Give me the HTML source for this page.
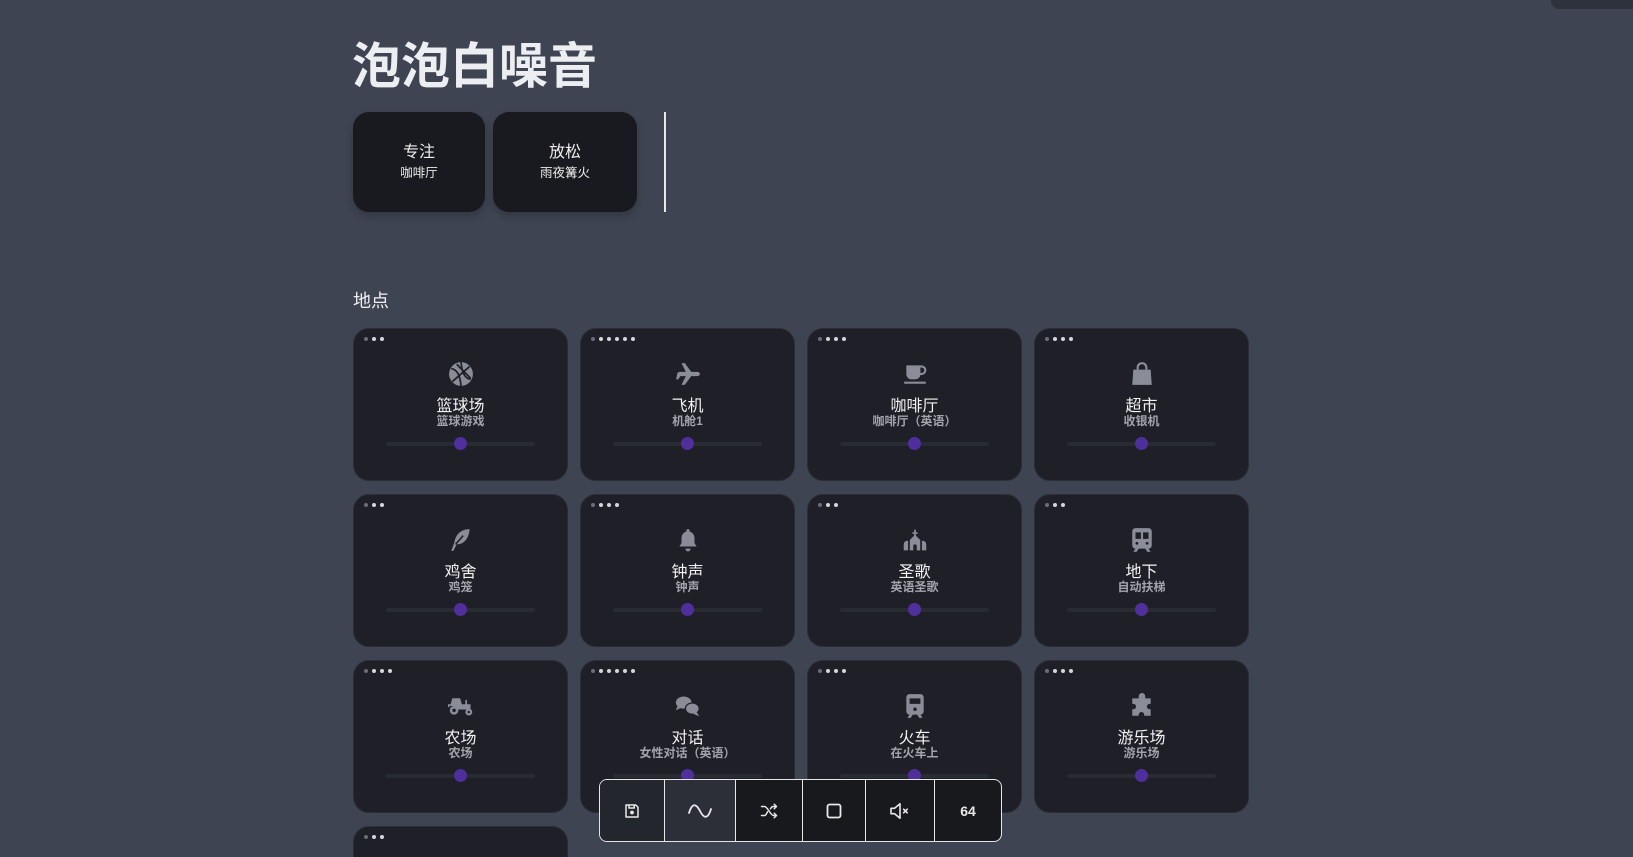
<!DOCTYPE html>
<html><head><meta charset="utf-8"><style>
*{margin:0;padding:0;box-sizing:border-box}
html,body{width:1633px;height:857px;overflow:hidden}
body{background:#3e4451;font-family:"Liberation Sans","Noto Sans CJK SC",sans-serif;position:relative;color:#fff}
h1{position:absolute;left:352px;top:36px;font-size:49px;font-weight:bold;color:#eceef2;line-height:62px}
.pre{position:absolute;top:112px;height:100px;background:#191a1f;border-radius:16px;text-align:center;box-shadow:0 4px 8px rgba(0,0,0,.2)}
.pre .a{font-size:16px;margin-top:31px;line-height:20px;color:#eee}
.pre .b{font-size:12.5px;line-height:18px;margin-top:1px;color:#eee}
.vl{position:absolute;left:664px;top:112px;width:2px;height:100px;background:#e8e8e8}
.lbl{position:absolute;left:353px;top:287px;font-size:18px;color:#f0f0f0}
.card{position:absolute;width:215px;height:153px;background:#1e1f27;border:1px solid #2b2e37;border-radius:16px}
.dots{position:absolute;left:10px;top:8px;display:flex;gap:4px}
.dots i{width:4px;height:4px;border-radius:50%;background:#d4d6dc}
.dots i:first-child{background:#6a6d77}
.ic{position:absolute;left:94px;top:32px;width:26px;height:26px}
.t{position:absolute;left:0;right:0;top:69px;text-align:center;font-size:16px;line-height:18px;color:#f2f2f2}
.s{position:absolute;left:0;right:0;top:85px;text-align:center;font-size:12px;line-height:14px;color:#a2a4aa;font-weight:bold}
.tr{position:absolute;left:32px;top:113px;width:149px;height:4px;border-radius:2px;background:#292b33}
.th{position:absolute;left:100px;top:108px;width:13px;height:13px;border-radius:50%;background:#4f2f9c}
.bar{position:absolute;left:599px;top:779px;width:403px;height:63px;background:#18191d;border:1px solid #e6e6e6;border-radius:8px;overflow:hidden;display:flex}
.bar div{height:100%;border-right:1px solid #e6e6e6;display:flex;align-items:center;justify-content:center}
.bar div:last-child{border-right:none}
.tl{position:absolute;left:1551px;top:0;width:82px;height:9px;background:#2e323b;border-bottom-left-radius:8px}
</style></head><body>
<div class="tl"></div>
<h1>泡泡白噪音</h1>
<div class="pre" style="left:353px;width:132px"><div class="a">专注</div><div class="b">咖啡厅</div></div>
<div class="pre" style="left:493px;width:144px"><div class="a">放松</div><div class="b">雨夜篝火</div></div>
<div class="vl"></div>
<div class="lbl">地点</div>

<div class="card" style="left:353px;top:328px"><div class="dots"><i></i><i></i><i></i></div>
<svg class="ic" viewBox="0 0 24 24"><circle cx="12" cy="12" r="11" fill="#8a8d97"/><path d="M3 7c5 1 8 5 9 16M21 17c-5-1-8-5-9-16M4 19L20 5M8 3l13 13" stroke="#1e1f27" stroke-width="1.6" fill="none"/></svg>
<div class="t">篮球场</div><div class="s">篮球游戏</div><div class="tr"></div><div class="th"></div></div>

<div class="card" style="left:580px;top:328px"><div class="dots"><i></i><i></i><i></i><i></i><i></i><i></i></div>
<svg class="ic" viewBox="0 0 24 24"><path d="M2 12c0-1 1-2 3-2h5L6 2h3l6 8h5c2 0 3 1 3 2s-1 2-3 2h-5l-6 8H6l4-8H5l-2 3H1l1-5z" fill="#8a8d97"/></svg>
<div class="t">飞机</div><div class="s">机舱1</div><div class="tr"></div><div class="th"></div></div>

<div class="card" style="left:807px;top:328px"><div class="dots"><i></i><i></i><i></i><i></i></div>
<svg class="ic" viewBox="0 0 24 24"><path d="M4 4h14a4 4 0 010 9h-1a5 5 0 01-5 4H9a5 5 0 01-5-5z M17 6v5h1a2.5 2.5 0 000-5z M2 19h20v2H2z" fill="#8a8d97" fill-rule="evenodd"/></svg>
<div class="t">咖啡厅</div><div class="s">咖啡厅（英语）</div><div class="tr"></div><div class="th"></div></div>

<div class="card" style="left:1034px;top:328px"><div class="dots"><i></i><i></i><i></i><i></i></div>
<svg class="ic" viewBox="0 0 24 24"><path d="M8 8V6a4 4 0 018 0v2" stroke="#8a8d97" stroke-width="2" fill="none"/><path d="M4 8h16l1 14H3z" fill="#8a8d97"/></svg>
<div class="t">超市</div><div class="s">收银机</div><div class="tr"></div><div class="th"></div></div>

<div class="card" style="left:353px;top:494px"><div class="dots"><i></i><i></i><i></i></div>
<svg class="ic" viewBox="0 0 24 24"><path d="M20 2C12 2 7 7 6 14l-3 8h2l3-6c6 0 11-4 12-14z" fill="#8a8d97"/><path d="M7 16l7-8" stroke="#1e1f27" stroke-width="1.4"/></svg>
<div class="t">鸡舍</div><div class="s">鸡笼</div><div class="tr"></div><div class="th"></div></div>

<div class="card" style="left:580px;top:494px"><div class="dots"><i></i><i></i><i></i><i></i></div>
<svg class="ic" viewBox="0 0 24 24"><path d="M12 2a1.5 1.5 0 011.5 1.5v.7A6 6 0 0118 10v5l2 3H4l2-3v-5a6 6 0 014.5-5.8v-.7A1.5 1.5 0 0112 2zM9.5 20h5a2.5 2.5 0 01-5 0z" fill="#8a8d97"/></svg>
<div class="t">钟声</div><div class="s">钟声</div><div class="tr"></div><div class="th"></div></div>

<div class="card" style="left:807px;top:494px"><div class="dots"><i></i><i></i><i></i></div>
<svg class="ic" viewBox="0 0 30 24"><path d="M14 0h2v3h2v2h-2v2l5 5v12h-4v-5a2 2 0 00-4 0v5H9V12l5-5V5h-2V3h2z M7 13v11H2v-7a4 4 0 015-4z M23 13v11h5v-7a4 4 0 00-5-4z" fill="#8a8d97"/></svg>
<div class="t">圣歌</div><div class="s">英语圣歌</div><div class="tr"></div><div class="th"></div></div>

<div class="card" style="left:1034px;top:494px"><div class="dots"><i></i><i></i><i></i></div>
<svg class="ic" viewBox="0 0 24 24"><path d="M6 1h12a3 3 0 013 3v13a3 3 0 01-3 3l2 3h-3l-2-3H9l-2 3H4l2-3a3 3 0 01-3-3V4a3 3 0 013-3zM6 5v6h5V5zM13 5v6h5V5zM6 15a1.3 1.3 0 102.6 0 1.3 1.3 0 00-2.6 0zM15.4 15a1.3 1.3 0 102.6 0 1.3 1.3 0 00-2.6 0z" fill="#8a8d97" fill-rule="evenodd"/></svg>
<div class="t">地下</div><div class="s">自动扶梯</div><div class="tr"></div><div class="th"></div></div>

<div class="card" style="left:353px;top:660px"><div class="dots"><i></i><i></i><i></i><i></i></div>
<svg class="ic" viewBox="0 0 30 24"><path d="M5 3h9l2 7h4V5h2v5h4v5l-3 1-14 0a5 5 0 00-9-2V10h3z" fill="#8a8d97"/><circle cx="7" cy="17" r="5" fill="#8a8d97"/><circle cx="7" cy="17" r="2" fill="#1e1f27"/><circle cx="24" cy="19" r="4" fill="#8a8d97"/><circle cx="24" cy="19" r="1.4" fill="#1e1f27"/></svg>
<div class="t">农场</div><div class="s">农场</div><div class="tr"></div><div class="th"></div></div>

<div class="card" style="left:580px;top:660px"><div class="dots"><i></i><i></i><i></i><i></i><i></i><i></i></div>
<svg class="ic" viewBox="0 0 30 24"><ellipse cx="10" cy="8" rx="9" ry="7" fill="#8a8d97"/><path d="M3 12l-2 5 6-3z" fill="#8a8d97"/><ellipse cx="20" cy="15" rx="8" ry="6.5" fill="#8a8d97" stroke="#1e1f27" stroke-width="1.5"/><path d="M25 19l3 5-7-3z" fill="#8a8d97"/></svg>
<div class="t">对话</div><div class="s">女性对话（英语）</div><div class="tr"></div><div class="th"></div></div>

<div class="card" style="left:807px;top:660px"><div class="dots"><i></i><i></i><i></i><i></i></div>
<svg class="ic" viewBox="0 0 24 24"><path d="M7 1h10a3 3 0 013 3v13a3 3 0 01-3 3l2 3h-3l-2-3H10l-2 3H5l2-3a3 3 0 01-3-3V4a3 3 0 013-3zM7 5v5h10V5z" fill="#8a8d97" fill-rule="evenodd"/><circle cx="12" cy="15" r="1.6" fill="#1e1f27"/></svg>
<div class="t">火车</div><div class="s">在火车上</div><div class="tr"></div><div class="th"></div></div>

<div class="card" style="left:1034px;top:660px"><div class="dots"><i></i><i></i><i></i><i></i></div>
<svg class="ic" viewBox="0 0 24 24"><path d="M9 3a3 3 0 016 0v2h5v5h-1a2.5 2.5 0 000 5h1v6h-6v-1a2.5 2.5 0 00-5 0v1H3v-6h1a2.5 2.5 0 000-5H3V5h6z" fill="#8a8d97"/></svg>
<div class="t">游乐场</div><div class="s">游乐场</div><div class="tr"></div><div class="th"></div></div>

<div class="card" style="left:353px;top:826px;height:31px;border-bottom:none;border-radius:16px 16px 0 0"><div class="dots"><i></i><i></i><i></i></div></div>

<div class="bar">
<div style="width:65px;background:#24262d"><svg width="18" height="18" viewBox="0 0 24 24" fill="none" stroke="#e8e8e8" stroke-width="2" stroke-linejoin="round"><path d="M4 4h13l3 3v13H4z"/><path d="M8 4v4h7V4"/><circle cx="12" cy="14" r="1.5" fill="#e8e8e8"/></svg></div>
<div style="width:71px;background:#2c2f38"><svg width="26" height="18" viewBox="0 0 26 18" fill="none" stroke="#e8e8e8" stroke-width="1.8" stroke-linecap="round"><path d="M2 11C5 1 9 1 13 9s8 8 11-2"/></svg></div>
<div style="width:67px"><svg width="20" height="18" viewBox="0 0 24 24" fill="none" stroke="#e8e8e8" stroke-width="2" stroke-linecap="round" stroke-linejoin="round"><path d="M2 6h4c4 0 8 12 12 12h4M2 18h4c2 0 3-3 4-5M14 9c1-2 2-3 4-3h4M19 3l3 3-3 3M19 15l3 3-3 3"/></svg></div>
<div style="width:63px"><svg width="16" height="16" viewBox="0 0 16 16" fill="none" stroke="#e8e8e8" stroke-width="1.8"><rect x="1.5" y="1.5" width="13" height="13" rx="2"/></svg></div>
<div style="width:69px"><svg width="22" height="18" viewBox="0 0 24 20" fill="none" stroke="#e8e8e8" stroke-width="1.8" stroke-linejoin="round"><path d="M2 7h4l6-5v16l-6-5H2z"/><path d="M16 8l4 4M20 8l-4 4" stroke-linecap="round"/></svg></div>
<div style="flex:1;font-weight:bold;font-size:14px;color:#e8e8e8">64</div>
</div>
</body></html>
